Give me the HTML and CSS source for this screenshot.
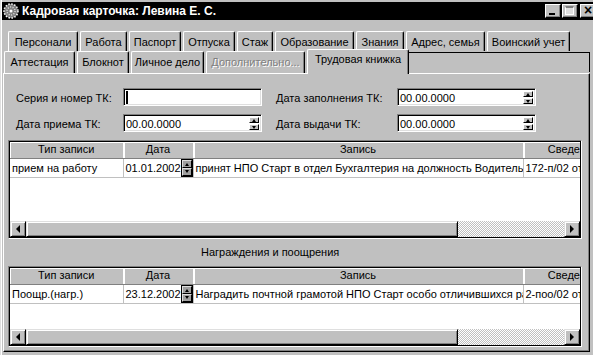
FILE: index.html
```html
<!DOCTYPE html>
<html lang="ru">
<head>
    <meta charset="UTF-8">
    <title>Кадровая карточка</title>
    <link rel="stylesheet" href="styles.css">
</head>
<body>
<div class="window">
    <div class="titlebar">
        <svg class="app-icon" width="16" height="16" viewBox="0 0 16 16">
            <circle cx="8" cy="8" r="7" fill="#808080"/>
            <circle cx="8" cy="8" r="7" fill="none" stroke="#fff" stroke-width="1.5" stroke-dasharray="1.5 1.5"/>
            <circle cx="8" cy="8" r="4" fill="none" stroke="#dfdfdf" stroke-width="1.5" stroke-dasharray="1 1.5"/>
            <circle cx="8" cy="8" r="1.5" fill="#fff"/>
        </svg>
        <span class="title">Кадровая карточка: Левина Е. С.</span>
        <div class="caption-btns">
            <span class="cbtn"><i class="g-min"></i></span>
            <span class="cbtn"><i class="g-max"></i></span>
            <span class="cbtn close">×</span>
        </div>
    </div>

    <div class="tabs row1">
        <span class="tab">Персонали</span>
        <span class="tab">Работа</span>
        <span class="tab">Паспорт</span>
        <span class="tab">Отпуска</span>
        <span class="tab">Стаж</span>
        <span class="tab">Образование</span>
        <span class="tab">Знания</span>
        <span class="tab">Адрес, семья</span>
        <span class="tab">Воинский учет</span>
    </div>
    <div class="tabs row2">
        <span class="tab">Аттестация</span>
        <span class="tab">Блокнот</span>
        <span class="tab">Личное дело</span>
        <span class="tab disabled">Дополнительно...</span>
        <span class="tab active">Трудовая книжка</span>
        <span class="tab-filler"></span>
    </div>

    <div class="panel">
        <div class="fields">
            <label>Серия и номер ТК:</label>
            <div class="field"><span class="caret"></span></div>
            <label class="right">Дата заполнения ТК:</label>
            <div class="field">00.00.0000<span class="spin"><i class="up"></i><i class="dn"></i></span></div>

            <label>Дата приема ТК:</label>
            <div class="field">00.00.0000<span class="spin"><i class="up"></i><i class="dn"></i></span></div>
            <label class="right">Дата выдачи ТК:</label>
            <div class="field">00.00.0000<span class="spin"><i class="up"></i><i class="dn"></i></span></div>
        </div>

        <div class="grid grid-main">
            <div class="grid-body">
                <table>
                    <colgroup><col class="c1"><col class="c2"><col class="c3"><col class="c4"></colgroup>
                    <tr class="head"><th>Тип записи</th><th>Дата</th><th>Запись</th><th>Сведения</th></tr>
                    <tr>
                        <td>прием на работу</td>
                        <td><div class="date-cell">01.01.2002<span class="spin dark"><i class="up"></i><i class="dn"></i></span></div></td>
                        <td>принят НПО Старт в отдел Бухгалтерия на должность Водитель</td>
                        <td>172-п/02 от 01.01.2002</td>
                    </tr>
                </table>
            </div>
            <div class="hscroll">
                <span class="sbtn"><i class="arr-l"></i></span>
                <span class="thumb"></span>
                <span class="track"></span>
                <span class="sbtn"><i class="arr-r"></i></span>
            </div>
        </div>

        <div class="section-caption">Награждения и поощрения</div>

        <div class="grid grid-awards">
            <div class="grid-body">
                <table>
                    <colgroup><col class="c1"><col class="c2"><col class="c3"><col class="c4"></colgroup>
                    <tr class="head"><th>Тип записи</th><th>Дата</th><th>Запись</th><th>Сведения</th></tr>
                    <tr>
                        <td>Поощр.(нагр.)</td>
                        <td><div class="date-cell">23.12.2002<span class="spin dark"><i class="up"></i><i class="dn"></i></span></div></td>
                        <td>Наградить почтной грамотой НПО Старт особо отличившихся работников</td>
                        <td>2-поо/02 от 23.12.2002</td>
                    </tr>
                </table>
            </div>
            <div class="hscroll">
                <span class="sbtn"><i class="arr-l"></i></span>
                <span class="thumb"></span>
                <span class="track"></span>
                <span class="sbtn"><i class="arr-r"></i></span>
            </div>
        </div>
    </div>
</div>
</body>
</html>
```

FILE: styles.css
```css
*{
    box-sizing: border-box;
}
body{
    margin: 0;
    background: #c0c0c0;
    font-family: "Liberation Sans", Arial, sans-serif;
    font-size: 11px;
    color: #000;
}
.window{
    width: 593px;
    height: 355px;
    overflow: hidden;
    background: #c0c0c0;
    border-left: 1px solid #dfdfdf;
    box-shadow: inset 1px 0 0 #fff;
    padding: 2px 0 0 1px;
}

/* title bar */
.titlebar{
    height: 18px;
    background: #000;
    display: flex;
    align-items: center;
    padding-left: 1px;
    color: #fff;
}
.app-icon{
    flex: none;
}
.title{
    margin-left: 3px;
    font-weight: bold;
    font-size: 12px;
    white-space: nowrap;
}
.caption-btns{
    margin-left: auto;
    display: flex;
    margin-right: -3px;
}
.cbtn{
    width: 16px;
    height: 14px;
    background: #c0c0c0;
    border-top: 1px solid #fff;
    border-left: 1px solid #fff;
    border-right: 1px solid #000;
    border-bottom: 1px solid #000;
    box-shadow: inset -1px -1px 0 #808080;
    position: relative;
    color: #000;
}
.cbtn + .cbtn{
    margin-left: 1px;
}
.cbtn.close{
    margin-left: 2px;
    font-weight: bold;
    font-size: 14px;
    line-height: 11px;
    text-align: center;
}
.g-min{
    position: absolute;
    left: 3px;
    bottom: 2px;
    width: 6px;
    height: 2px;
    background: #000;
}
.g-max{
    position: absolute;
    left: 2px;
    top: 1px;
    width: 9px;
    height: 9px;
    border: 1px solid #fff;
    border-top: 2px solid #808080;
    background: #dfdfdf;
}

/* tabs */
.tabs{
    display: flex;
    align-items: flex-end;
    white-space: nowrap;
}
.row1{
    margin-top: 11px;
    height: 20px;
    padding-left: 6px;
    gap: 2px;
}
.row2{
    height: 22px;
    padding-left: 2px;
    gap: 2px;
    position: relative;
    z-index: 2;
}
.tab{
    height: 100%;
    display: flex;
    align-items: center;
    justify-content: center;
    border-top: 1px solid #fff;
    border-left: 1px solid #fff;
    border-right: 1px solid #000;
    box-shadow: inset -1px 0 0 #808080;
    border-radius: 2px 2px 0 0;
    background: #c0c0c0;
}
.row1 .tab{ height: 20px; }
.row1 .tab:nth-child(1){ width: 70px; }
.row1 .tab:nth-child(2){ width: 47px; }
.row1 .tab:nth-child(3){ width: 52px; }
.row1 .tab:nth-child(4){ width: 52px; }
.row1 .tab:nth-child(5){ width: 36px; }
.row1 .tab:nth-child(6){ width: 79px; }
.row1 .tab:nth-child(7){ width: 48px; }
.row1 .tab:nth-child(8){ width: 79px; }
.row1 .tab:nth-child(9){ width: 83px; }

.row2 .tab{ height: 22px; padding-bottom: 1px; }
.row2 .tab:nth-child(1){ width: 71px; }
.row2 .tab:nth-child(2){ width: 52px; }
.row2 .tab:nth-child(3){ width: 73px; }
.row2 .tab:nth-child(4){ width: 99px; }
.row2 .tab.active{
    width: 102px;
    height: 25px;
    margin-bottom: -1px;
    padding-bottom: 6px;
}
.tab.disabled{
    color: #808080;
    text-shadow: 1px 1px 0 #fff;
}
.tab-filler{
    flex: 1;
    height: 20px;
    margin-left: -2px;
    margin-right: 3px;
    margin-bottom: 1px;
    border-top: 1px solid #000;
    border-right: 1px solid #000;
}

/* panel */
.panel{
    margin-left: 1px;
    width: 587px;
    border-top: 1px solid #fff;
    border-left: 1px solid #fff;
    border-right: 1px solid #000;
    border-bottom: 1px solid #000;
    box-shadow: inset -1px -1px 0 #808080;
    padding: 14px 0 4px 4px;
}
.fields{
    display: grid;
    grid-template-columns: 107px 139px 135px 139px;
    row-gap: 8px;
    padding-left: 8px;
    align-items: center;
}
.fields label{
    white-space: nowrap;
    padding-top: 2px;
}
.fields label.right{
    padding-left: 14px;
}
.field{
    height: 18px;
    background: #fff;
    border-top: 1px solid #808080;
    border-left: 1px solid #808080;
    border-right: 1px solid #fff;
    border-bottom: 1px solid #fff;
    box-shadow: inset 1px 1px 0 #000, inset -1px -1px 0 #dfdfdf;
    display: flex;
    align-items: center;
    padding: 1px 2px 0 2px;
}
.caret{
    width: 2px;
    height: 13px;
    background: #000;
}

/* spin buttons */
.spin{
    margin-left: auto;
    display: flex;
    flex-direction: column;
    gap: 1px;
}
.spin i{
    width: 10px;
    height: 6px;
    background: #c0c0c0;
    border-top: 1px solid #fff;
    border-left: 1px solid #fff;
    border-right: 1px solid #000;
    border-bottom: 1px solid #000;
    position: relative;
}
.spin i::after{
    content: '';
    position: absolute;
    left: 2px;
    border-left: 2.5px solid transparent;
    border-right: 2.5px solid transparent;
}
.spin .up::after{
    top: 1px;
    border-bottom: 3px solid #000;
}
.spin .dn::after{
    top: 1px;
    border-top: 3px solid #000;
}
.spin.dark{
    gap: 0;
    border: 1px solid #000;
    flex: none;
}
.spin.dark i{
    height: 8px;
    background: #a0a0a0;
    border-color: #dfdfdf #000 #000 #dfdfdf;
}
.spin.dark .up::after{ top: 2px; }
.spin.dark .dn::after{ top: 1px; }

/* grids */
.grid{
    width: 574px;
    border-top: 1px solid #808080;
    border-left: 1px solid #808080;
    border-right: 1px solid #fff;
    border-bottom: 1px solid #fff;
    box-shadow: inset 1px 1px 0 #000, inset -1px -1px 0 #000;
    padding: 1px;
    display: flex;
    flex-direction: column;
}
.grid-main{
    margin-top: 8px;
    height: 99px;
}
.grid-awards{
    height: 81px;
}
.grid-body{
    flex: 1;
    overflow: hidden;
    background: #fff;
}
table{
    border-collapse: collapse;
    table-layout: fixed;
    width: 613px;
}
col.c1{ width: 113px; }
col.c2{ width: 70px; }
col.c3{ width: 330px; }
col.c4{ width: 100px; }
th{
    height: 16px;
    font-weight: normal;
    background: #c0c0c0;
    border-right: 1px solid #fff;
    border-bottom: 1px solid #808080;
    box-shadow: inset 1px 1px 0 #fff;
    padding: 0;
    white-space: nowrap;
    overflow: hidden;
    line-height: 15px;
}
td{
    height: 19px;
    border-right: 1px solid #c0c0c0;
    border-bottom: 1px solid #c0c0c0;
    padding: 0 0 0 2px;
    white-space: nowrap;
    overflow: hidden;
}
.date-cell{
    display: flex;
    align-items: center;
}
.date-cell .spin{
    margin-left: auto;
    margin-right: 1px;
}

.hscroll{
    height: 16px;
    display: flex;
    flex: none;
}
.sbtn{
    width: 16px;
    background: #c0c0c0;
    border-top: 1px solid #dfdfdf;
    border-left: 1px solid #dfdfdf;
    border-right: 1px solid #000;
    border-bottom: 1px solid #000;
    box-shadow: inset 1px 1px 0 #fff, inset -1px -1px 0 #808080;
    display: flex;
    align-items: center;
    justify-content: center;
}
.arr-l{
    border-top: 4px solid transparent;
    border-bottom: 4px solid transparent;
    border-right: 4px solid #000;
}
.arr-r{
    border-top: 4px solid transparent;
    border-bottom: 4px solid transparent;
    border-left: 4px solid #000;
}
.thumb{
    width: 432px;
    background: #c0c0c0;
    border-top: 1px solid #dfdfdf;
    border-left: 1px solid #dfdfdf;
    border-right: 1px solid #000;
    border-bottom: 1px solid #000;
    box-shadow: inset 1px 1px 0 #fff, inset -1px -1px 0 #808080;
}
.track{
    flex: 1;
    background: repeating-conic-gradient(#fff 0 25%, #c0c0c0 0 50%) 0 0 / 2px 2px;
}
.section-caption{
    height: 27px;
    line-height: 27px;
    padding-left: 193px;
}
```
